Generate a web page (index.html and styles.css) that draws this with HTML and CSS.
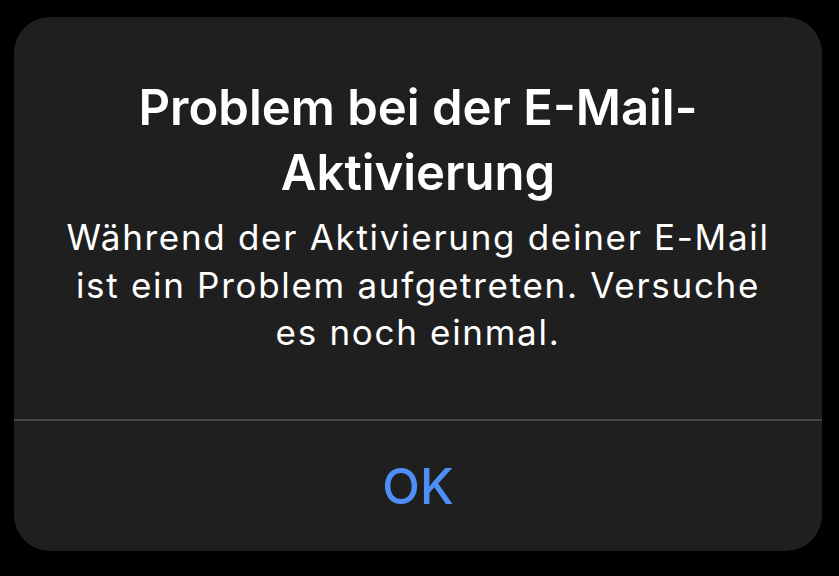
FILE: index.html
```html
<!DOCTYPE html>
<html lang="de">

<head>
    <meta charset="UTF-8">
    <meta name="viewport" content="width=device-width, initial-scale=1.0">
    <title>Problem bei der E-Mail-Aktivierung</title>
    <link rel="stylesheet" href="styles.css">
</head>

<body>
    <div class="alert">
        <div class="alert-content">
            <h1 class="alert-title">Problem bei der E-Mail-<br>Aktivierung</h1>
            <p class="alert-message">Während der Aktivierung deiner E-Mail ist ein Problem aufgetreten. Versuche es noch einmal.</p>
        </div>
        <div class="alert-actions">
            <button class="alert-button">OK</button>
        </div>
    </div>
</body>

</html>
```

FILE: styles.css
```css
html,
body {
    margin: 0;
    height: 100%;
}

body {
    font-family: Inter, "Open Sans", sans-serif;
    background-color: #000;
    color: #fff;
    padding: 17px 17px 25px 14px;
    box-sizing: border-box;
}

.alert {
    height: 534px;
    background: #1f1f1f;
    border-radius: 36px;
    display: flex;
    flex-direction: column;
    overflow: hidden;
}

.alert-content {
    height: 404px;
    box-sizing: border-box;
    padding: 58px 36px 0;
    text-align: center;
    border-bottom: 2px solid #464646;
}

.alert-title {
    margin: 0;
    font-size: 49px;
    line-height: 65px;
    font-weight: 600;
}

.alert-message {
    margin: 9px 0 0;
    font-size: 35px;
    line-height: 47.5px;
    font-weight: 400;
    letter-spacing: 1.7px;
}

.alert-actions {
    flex: 1;
    display: flex;
    align-items: center;
    justify-content: center;
}

.alert-button {
    background: none;
    border: 0;
    padding: 0;
    font-family: inherit;
    font-size: 49px;
    font-weight: 500;
    color: #4d8ff6;
}
```
